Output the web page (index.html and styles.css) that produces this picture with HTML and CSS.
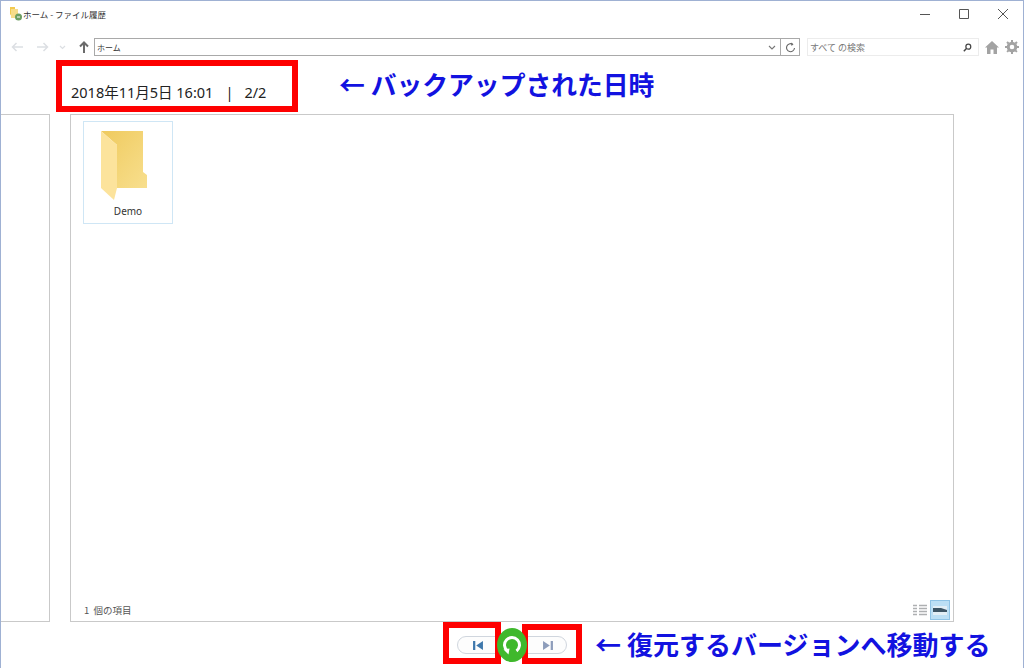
FILE: index.html
```html
<!DOCTYPE html>
<html lang="ja">
<head>
  <meta charset="UTF-8">
  <title>ホーム - ファイル履歴</title>
  <link rel="stylesheet" href="styles.css">
</head>
<body>
<div class="window">
  <div class="titlebar">
    <svg class="app-icon" width="14" height="16" viewBox="0 0 14 16">
      <path d="M1 1h5v10H3L1 8z" fill="#f2c94f"/>
      <path d="M2 3h7v9H2z" fill="#f7dc8a"/>
      <circle cx="9.5" cy="11" r="3.5" fill="#6d9e62"/>
      <path d="M8 11h3" stroke="#fff" stroke-width="1"/>
    </svg>
    <span class="title-text">ホーム - ファイル履歴</span>
    <div class="win-buttons">
      <svg width="12" height="12" viewBox="0 0 12 12"><path d="M1 6.5h10" stroke="#555" stroke-width="1"/></svg>
      <svg width="12" height="12" viewBox="0 0 12 12"><path d="M1.5 1.5h9v9h-9z" fill="none" stroke="#555" stroke-width="1"/></svg>
      <svg width="12" height="12" viewBox="0 0 12 12"><path d="M1 1l10 10M11 1L1 11" stroke="#555" stroke-width="1"/></svg>
    </div>
  </div>

  <div class="toolbar">
    <div class="nav-buttons">
      <svg width="12" height="10" viewBox="0 0 12 10"><path d="M12 5H1.500M5.500 1L1.500 5l4 4" fill="none" stroke="#dcdfe3" stroke-width="1.500"/></svg>
      <svg width="12" height="10" viewBox="0 0 12 10"><path d="M0 5h10.500M6.500 1l4 4-4 4" fill="none" stroke="#dcdfe3" stroke-width="1.500"/></svg>
      <svg class="nav-drop" width="7" height="5" viewBox="0 0 7 5"><path d="M1 1l2.500 2.500L6 1" fill="none" stroke="#dcdfe3" stroke-width="1.200"/></svg>
      <svg class="up-arrow" width="10" height="12" viewBox="0 0 10 12"><path d="M5 12V2M1 5.500L5 1.500l4 4" fill="none" stroke="#6b6b6b" stroke-width="2"/></svg>
    </div>
    <div class="address">
      <span class="address-text">ホーム</span>
      <svg class="address-drop" width="8" height="5" viewBox="0 0 8 5"><path d="M1 1l3 3 3-3" fill="none" stroke="#777" stroke-width="1.100"/></svg>
      <span class="address-refresh">
        <svg width="11" height="11" viewBox="0 0 11 11"><path d="M7.500 2.200A4 4 0 1 0 9.500 6" fill="none" stroke="#666" stroke-width="1.100"/><path d="M6 .5l2.500 1.700L6.500 4z" fill="#666"/></svg>
      </span>
    </div>
    <div class="search">
      <span>すべて の検索</span>
      <svg width="9" height="9" viewBox="0 0 11 11"><circle cx="6.500" cy="4.500" r="3" fill="none" stroke="#444" stroke-width="1.500"/><path d="M4.500 6.500L1 10" stroke="#444" stroke-width="1.800"/></svg>
    </div>
    <div class="tools">
      <svg width="14" height="13" viewBox="0 0 14 13"><path d="M7 0L0 6.500h2V13h3.500V8.500h3V13H12V6.500h2z" fill="#a3a3a3"/></svg>
      <svg width="14" height="14" viewBox="0 0 14 14"><circle cx="7" cy="7" r="3.800" fill="none" stroke="#a3a3a3" stroke-width="3"/><path d="M7 0v14M0 7h14M2 2l10 10M12 2L2 12" stroke="#a3a3a3" stroke-width="2" stroke-dasharray="2.200 9.600 2.200"/></svg>
    </div>
  </div>

  <div class="date-row">
    <div class="date-text"><span>2018年11月5日 16:01</span><span class="date-sep">|</span><span>2/2</span></div>
    <div class="note note-top">← バックアップされた日時</div>
  </div>

  <div class="panels">
    <div class="side-panel"></div>
    <div class="main-panel">
      <div class="folder-item">
        <svg class="folder" width="46" height="69" viewBox="0 0 46 69">
          <defs>
            <linearGradient id="folderBack" x1="0" y1="0" x2="1" y2="1">
              <stop offset="0" stop-color="#efca5e"/>
              <stop offset="1" stop-color="#f8df8e"/>
            </linearGradient>
          </defs>
          <path d="M0 0h42v41l4 3v13H16V14z" fill="url(#folderBack)"/>
          <path d="M0 0l16 14v43l-3 12L0 57z" fill="#fce39c"/>
        </svg>
        <span class="folder-name">Demo</span>
      </div>
      <div class="status-row">
        <span class="status-text">1 個の項目</span>
        <div class="view-buttons">
          <svg class="view-list" width="14" height="13" viewBox="0 0 14 13"><path d="M0 1.500h4M6 1.500h8M0 4.500h4M6 4.500h8M0 7.500h4M6 7.500h8M0 10.500h4M6 10.500h8" stroke="#aeb0b2" stroke-width="1.500"/></svg>
          <span class="view-active">
            <svg width="14" height="9" viewBox="0 0 14 9"><path d="M0 0h14v9H0z" fill="#e2eef6"/><path d="M0 2h8l6 2v2H0z" fill="#3d5566"/></svg>
          </span>
        </div>
      </div>
    </div>
  </div>

  <div class="controls">
    <div class="player">
      <span class="pill pill-prev">
        <svg width="10" height="9" viewBox="0 0 11 10"><path d="M0 0h2.500v10H0zM11 0v10L3.500 5z" fill="#3f78ac"/></svg>
      </span>
      <span class="restore">
        <svg width="24" height="24" viewBox="0 0 24 24"><path d="M7.500 18A7.500 7.500 0 1 1 16.500 18" fill="none" stroke="#fff" stroke-width="3"/><path d="M3.500 16.500l6-1-1 6z" fill="#fff"/></svg>
      </span>
      <span class="pill pill-next">
        <svg width="10" height="9" viewBox="0 0 11 10"><path d="M11 0H8.500v10H11zM0 0v10l7.500-5z" fill="#8e9dbb"/></svg>
      </span>
    </div>
    <div class="note note-bottom">← 復元するバージョンへ移動する</div>
  </div>

  <div class="red-box box-date"></div>
  <div class="red-box box-prev"></div>
  <div class="red-box box-next"></div>
</div>
</body>
</html>
```

FILE: styles.css
```css
* {
  box-sizing: border-box;
}

html, body {
  margin: 0;
  padding: 0;
}

body {
  background-color: #fff;
  font-family: "Noto Sans CJK JP", "Noto Sans", sans-serif;
  color: #222;
}

.window {
  position: relative;
  display: flex;
  flex-direction: column;
  width: 1024px;
  height: 668px;
  overflow: hidden;
  border: 1px solid #9fb1d3;
  border-bottom: 0;
  background-color: #fff;
}

.titlebar {
  display: flex;
  align-items: center;
  height: 26px;
  padding-left: 8px;
  flex-shrink: 0;
}

.title-text {
  font-size: 8.500px;
  color: #333;
}

.win-buttons {
  display: flex;
  gap: 27px;
  margin-left: auto;
  margin-right: 14px;
  align-items: center;
}

.toolbar {
  display: flex;
  align-items: center;
  height: 40px;
  flex-shrink: 0;
}

.nav-buttons {
  display: flex;
  align-items: center;
  gap: 14px;
  width: 93px;
  padding-left: 10px;
}

.nav-drop {
  margin-left: -4px;
}

.up-arrow {
  margin-left: -1px;
}

.address {
  display: flex;
  align-items: center;
  width: 706px;
  height: 18px;
  border: 1px solid #a9a9a9;
}

.address-text {
  font-size: 8px;
  padding-left: 2px;
  color: #333;
}

.address-drop {
  margin-left: auto;
  margin-right: 4px;
}

.address-refresh {
  display: flex;
  align-items: center;
  justify-content: center;
  width: 19px;
  height: 100%;
  border-left: 1px solid #a9a9a9;
}

.search {
  display: flex;
  align-items: center;
  justify-content: space-between;
  width: 172px;
  height: 18px;
  margin-left: 7px;
  padding: 0 6px 0 2px;
  border: 1px solid #ececec;
  font-size: 9px;
  color: #777;
}

.tools {
  display: flex;
  align-items: center;
  gap: 6px;
  margin-left: 6px;
}

.date-row {
  display: flex;
  align-items: center;
  height: 47px;
  padding-left: 70px;
  flex-shrink: 0;
}

.date-text {
  width: 269px;
  margin-top: 2px;
  font-family: "Noto Sans", "Noto Sans CJK JP", sans-serif;
  font-size: 14.500px;
  color: #222;
  white-space: nowrap;
}

.date-sep {
  margin: 0 11px 0 12px;
}

.note {
  font-weight: bold;
  color: #1212e0;
  white-space: nowrap;
}

.note-top {
  margin: -15px 0 0 -1px;
  font-size: 25.800px;
}

.panels {
  display: flex;
  gap: 20px;
  height: 508px;
  flex-shrink: 0;
}

.side-panel {
  width: 49px;
  border: 1px solid #c9c9c9;
  border-left: 0;
}

.main-panel {
  position: relative;
  display: flex;
  flex-direction: column;
  justify-content: space-between;
  width: 884px;
  padding: 6px 3px 0 12px;
  border: 1px solid #c9c9c9;
}

.folder-item {
  display: flex;
  flex-direction: column;
  align-items: center;
  width: 90px;
  height: 103px;
  padding-top: 9px;
  border: 1px solid #cfe6f5;
}

.folder {
  margin-right: 8px;
}

.folder-name {
  margin-top: 4px;
  font-family: "Noto Sans", sans-serif;
  font-size: 10px;
  color: #333;
}

.status-row {
  display: flex;
  align-items: center;
  justify-content: space-between;
  height: 22px;
}

.status-text {
  padding-left: 1px;
  font-size: 9.500px;
  word-spacing: 2px;
  color: #555;
}

.view-buttons {
  display: flex;
  align-items: center;
  gap: 3px;
}

.view-active {
  display: flex;
  align-items: center;
  justify-content: center;
  width: 20px;
  height: 20px;
  background-color: #bcdff5;
  border: 1px solid #8fc3e6;
}

.controls {
  display: flex;
  align-items: center;
  height: 47px;
  padding-left: 456px;
}

.player {
  display: flex;
  align-items: center;
  width: 140px;
}

.pill {
  display: flex;
  align-items: center;
  justify-content: center;
  width: 42px;
  height: 18px;
  border: 1px solid #d0d6de;
  background-color: #fdfdfd;
}

.pill-prev {
  border-radius: 9px 0 0 9px;
  margin-right: -2px;
}

.pill-next {
  width: 43px;
  padding-left: 4px;
  border-radius: 0 9px 9px 0;
  margin-left: -3px;
}

.restore {
  position: relative;
  z-index: 1;
  display: flex;
  align-items: center;
  justify-content: center;
  width: 30px;
  height: 34px;
  border-radius: 50%;
  background-color: #3fb82c;
}

.note-bottom {
  margin: -4px 0 0 -2px;
  font-size: 26px;
}

.red-box {
  position: absolute;
  border: 6px solid #fe0000;
  pointer-events: none;
}

.box-date {
  left: 55px;
  top: 59px;
  width: 242px;
  height: 52px;
}

.box-prev {
  left: 442px;
  top: 621px;
  width: 58px;
  height: 42px;
}

.box-next {
  left: 521px;
  top: 623px;
  width: 60px;
  height: 40px;
}
```
